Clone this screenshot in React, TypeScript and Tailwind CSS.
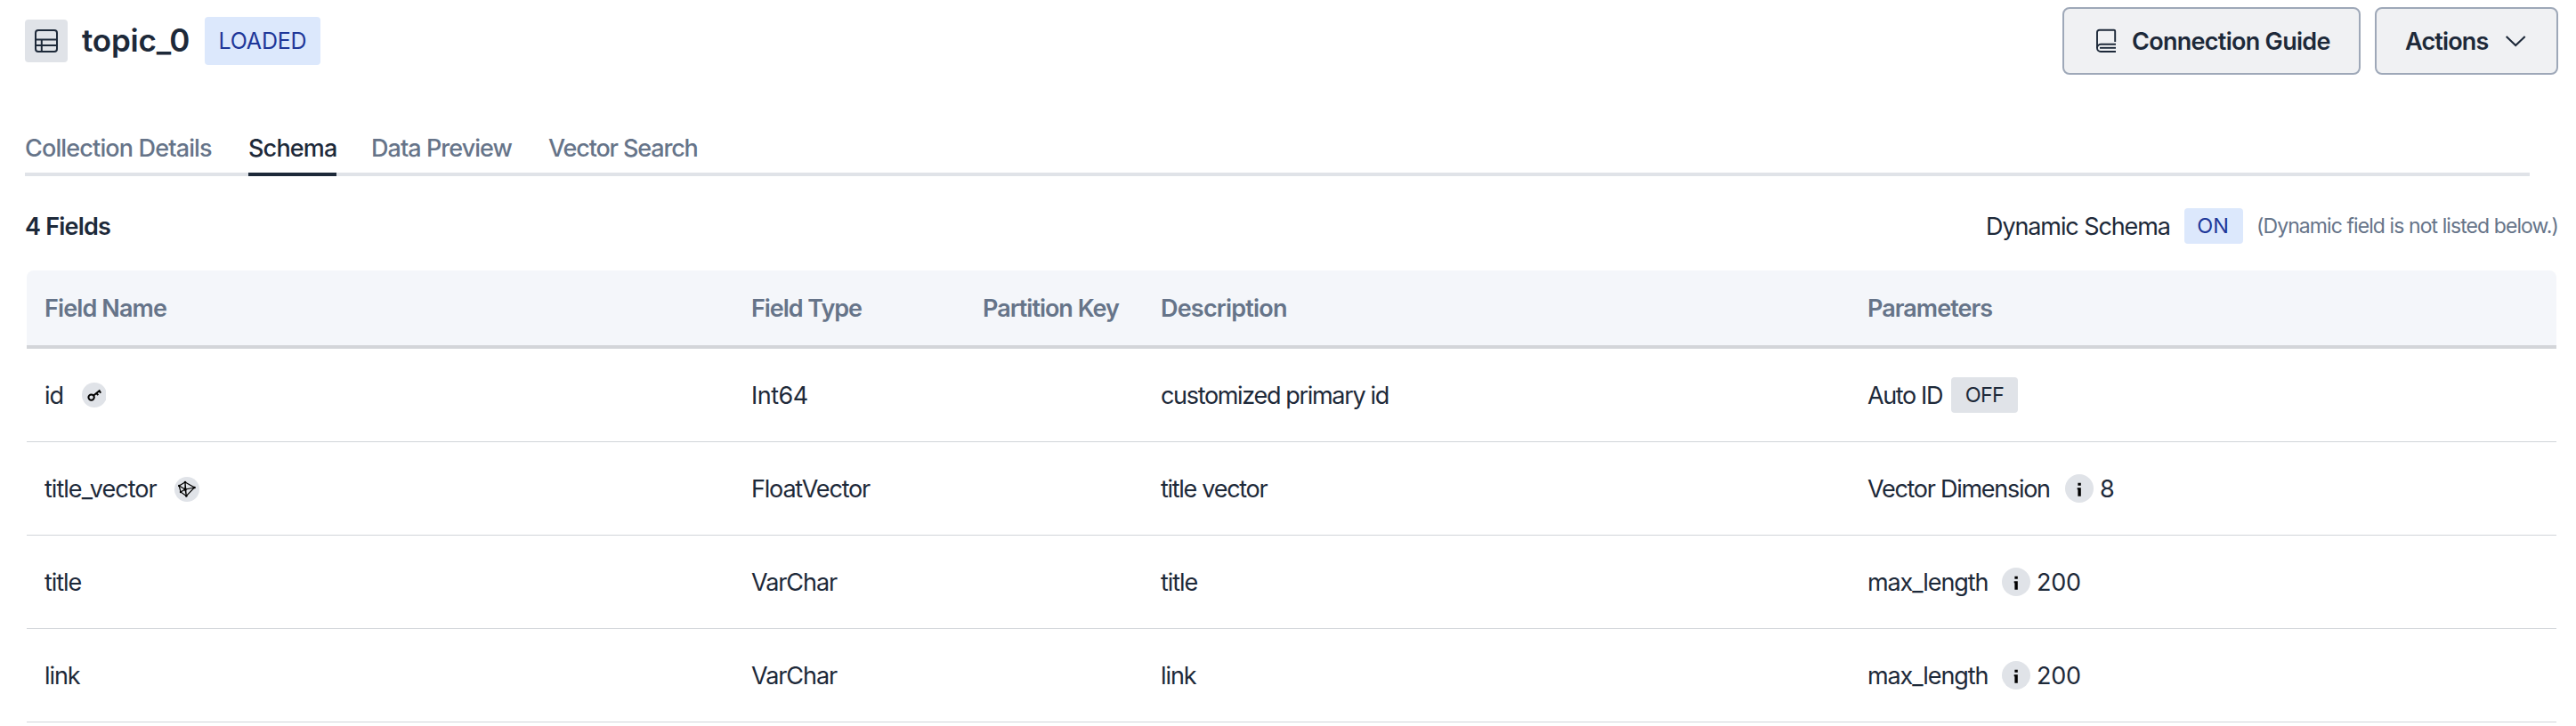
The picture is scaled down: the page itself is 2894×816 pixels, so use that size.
import type { ReactNode } from "react";

function CollectionIcon() {
  return (
    <svg width="28" height="28" viewBox="0 0 28 28" fill="none" stroke="currentColor" strokeWidth="2">
      <rect x="2" y="2" width="24" height="24" rx="3" />
      <path d="M2 12.4h24M2 19h24M8.800 12.400V26" />
    </svg>
  );
}

function BookIcon() {
  return (
    <svg width="24" height="28" viewBox="0 0 24 28" fill="none" stroke="currentColor" strokeWidth="1.900">
      <path d="M22.200 15V3a1.200 1.200 0 0 0-1.200-1.200H4.500A2.500 2.500 0 0 0 2 4.300V22a4 4 0 0 0 4 4h17" />
      <path d="M2 22a4 4 0 0 1 4-4.200h17" />
      <path d="M5 21.800h18" />
    </svg>
  );
}

function ChevronIcon() {
  return (
    <svg width="24" height="14" viewBox="0 0 24 14" fill="none" stroke="currentColor" strokeWidth="2.100">
      <path d="M1.700 2 12.200 12.100 22.700 2" />
    </svg>
  );
}

function KeyIcon() {
  return (
    <svg width="27" height="28" viewBox="0 0 27 28" className="shrink-0">
      <circle cx="14" cy="14" r="14" fill="#e0e3e8" />
      <g fill="none" stroke="#000" strokeWidth="2">
        <circle cx="10.600" cy="16.600" r="3.200" />
        <path d="M13.200 14.400 20.400 8.400M16.300 11.800l2 2.300M19.300 9.300l2 2.300" />
      </g>
    </svg>
  );
}

function VectorIcon() {
  return (
    <svg width="28" height="28" viewBox="0 0 28 28" className="mt-0.5 shrink-0">
      <circle cx="14" cy="14" r="14" fill="#e0e3e8" />
      <g fill="none" stroke="#000" strokeWidth="1.200">
        <path d="M12 6 22.500 12 13.300 21.500 7 17 5.200 10Z" />
        <path d="M12 6V14L22.500 12M12 14 5.200 10M12 14 7 17M12 14 13.300 21.500M12 6 13.300 21.500" />
      </g>
      <g fill="#000">
        <circle cx="12" cy="6" r="1.300" />
        <circle cx="22.500" cy="12" r="1.300" />
        <circle cx="13.300" cy="21.500" r="1.300" />
        <circle cx="7" cy="17" r="1.200" />
        <circle cx="5.200" cy="10" r="1.200" />
        <circle cx="12" cy="14" r="1.700" />
      </g>
    </svg>
  );
}

function InfoIcon() {
  return (
    <svg width="32" height="32" viewBox="0 0 32 32" className="shrink-0">
      <circle cx="16" cy="16" r="16" fill="#e0e3e8" />
      <path d="M14.400 9.800h3.400v3h-3.400zM13.700 15.200h4.100v9.600h-3.400v-7.600h-.7z" fill="#000" />
    </svg>
  );
}

const columns = [
  { label: "Field Name", tracking: "tracking-[-0.88px]" },
  { label: "Field Type", tracking: "tracking-[-1.05px]" },
  { label: "Partition Key", tracking: "tracking-[-1.02px]" },
  { label: "Description", tracking: "tracking-[-0.8px]" },
  { label: "Parameters", tracking: "tracking-[-0.95px]" },
];

type Field = {
  name: ReactNode;
  type: ReactNode;
  description: ReactNode;
  parameters: ReactNode;
};

const maxLength = (
  <>
    <span className="w-[151px] tracking-[-1.1px]">max_length</span>
    <InfoIcon />
    <span className="ml-[7px] tracking-[-0.2px]">200</span>
  </>
);

const fields: Field[] = [
  {
    name: (
      <>
        <span className="w-[42px]">id</span>
        <KeyIcon />
      </>
    ),
    type: <span className="tracking-[-0.5px]">Int64</span>,
    description: <span className="tracking-[-1.33px]">customized primary id</span>,
    parameters: (
      <>
        <span className="w-[94px] tracking-[-1.37px]">Auto ID</span>
        <span className="flex h-10 w-[75px] items-center justify-center rounded bg-[#e0e3e8] text-[23.5px] leading-8 tracking-[-0.8px]">
          OFF
        </span>
      </>
    ),
  },
  {
    name: (
      <>
        <span className="w-[146px] tracking-[-0.97px]">title_vector</span>
        <VectorIcon />
      </>
    ),
    type: <span className="tracking-[-1.18px]">FloatVector</span>,
    description: <span className="tracking-[-1.29px]">title vector</span>,
    parameters: (
      <>
        <span className="w-[222px] tracking-[-1.28px]">Vector Dimension</span>
        <InfoIcon />
        <span className="ml-[7px]">8</span>
      </>
    ),
  },
  { name: "title", type: "VarChar", description: "title", parameters: maxLength },
  { name: "link", type: "VarChar", description: "link", parameters: maxLength },
];

const cols = "grid grid-cols-[794px_260px_200px_794px_794px]";

export default function App() {
  return (
    <div className="h-[816px] overflow-hidden bg-white px-7 pt-2 font-['Inter','Liberation_Sans',sans-serif] text-[27px] leading-[33px] whitespace-nowrap text-[#1d2939]">
      <header className="-mr-2 flex h-[76px] items-center">
        <div className="flex size-12 items-center justify-center rounded bg-[#e0e3e8]">
          <CollectionIcon />
        </div>
        <h1 className="mb-0.5 ml-4 w-[138px] text-[35px] leading-10 font-semibold tracking-[-0.2px]">topic_0</h1>
        <span className="flex h-[54px] w-[130px] items-center justify-center rounded bg-[#dce8fc] text-[25px] tracking-[-0.2px] text-[#1e3799]">
          LOADED
        </span>
        <div className="ml-auto flex gap-4">
          <button className="flex h-[76px] w-[335px] items-center rounded-lg border-2 border-[#9ea8b8] bg-[#f0f1f3] pl-[35px] font-semibold tracking-[-0.71px]">
            <BookIcon />
            <span className="ml-[17px]">Connection Guide</span>
          </button>
          <button className="flex h-[76px] w-[206px] items-center rounded-lg border-2 border-[#9ea8b8] bg-[#f0f1f3] pl-8 font-semibold tracking-[-0.84px]">
            <span className="w-[112px] text-left">Actions</span>
            <ChevronIcon />
          </button>
        </div>
      </header>

      <nav className="mt-[66px] mr-6 flex h-12 border-b-4 border-[#e0e3e8] font-medium text-[#667489]">
        <a className="mr-[41px] w-[210px] tracking-[-0.85px]">Collection Details</a>
        <a className="mr-[38px] h-12 w-[99px] border-b-4 border-[#1d2939] tracking-[-0.82px] text-[#1d2939]">Schema</a>
        <a className="mr-[40px] ml-px w-[159px] tracking-[-0.95px]">Data Preview</a>
        <a className="tracking-[-1.15px]">Vector Search</a>
      </nav>

      <div className="mt-9 -mr-2 flex h-10 items-center">
        <h2 className="font-semibold tracking-[-0.8px]">4 Fields</h2>
        <span className="ml-auto w-[223px] tracking-[-1.1px]">Dynamic Schema</span>
        <span className="flex h-10 w-[66px] items-center justify-center rounded bg-[#dce8fc] pr-0.5 text-[23.5px] leading-8 text-[#1e3799]">
          ON
        </span>
        <span className="ml-[15px] w-[339px] text-[23px] tracking-[-0.92px] text-[#667489]">
          (Dynamic field is not listed below.)
        </span>
      </div>

      <section className="mt-[30px] ml-0.5 w-[2842px]">
        <div
          className={`${cols} h-[88px] items-center rounded-t-lg border-b-4 border-[#d3d5d9] bg-[#f4f6fa] font-semibold text-[#667489]`}
        >
          {columns.map((c) => (
            <div key={c.label} className={`pl-5 ${c.tracking}`}>
              {c.label}
            </div>
          ))}
        </div>
        {fields.map((f, i) => (
          <div key={i} className={`${cols} h-[105px] items-center border-b border-[#d1d4d9] tracking-[-1.07px]`}>
            <div className="flex items-center pl-5">{f.name}</div>
            <div className="pl-5">{f.type}</div>
            <div />
            <div className="pl-5">{f.description}</div>
            <div className="flex items-center pl-5">{f.parameters}</div>
          </div>
        ))}
      </section>
    </div>
  );
}
